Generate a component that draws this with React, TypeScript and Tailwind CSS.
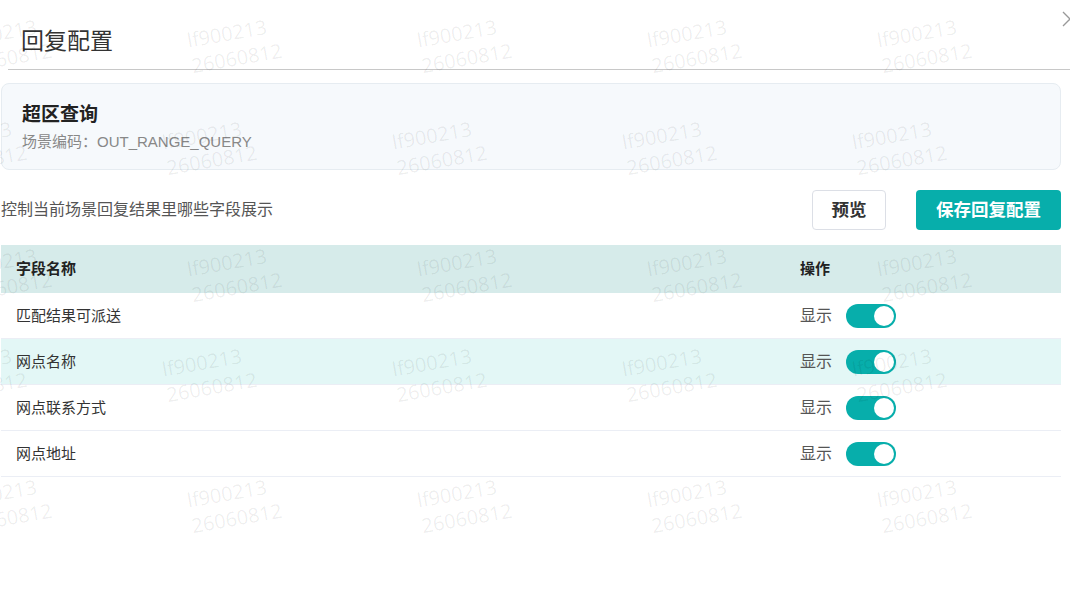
import React from "react";

const fields = ["匹配结果可派送", "网点名称", "网点联系方式", "网点地址"];

// watermark rows: [top, firstLeft]
const marks: [number, number][] = [
    [28, -45],
    [130, -70],
    [257, -45],
    [357, -70],
    [488, -45],
];

const Watermark = () => (
    <div className="pointer-events-none absolute inset-0 z-10 overflow-hidden">
        {marks.map(([top, left], r) =>
            [0, 1, 2, 3, 4].map((k) => (
                <div
                    key={`${r}-${k}`}
                    className="absolute origin-top-left -rotate-[10deg] whitespace-nowrap text-[20px] leading-[26px] text-black/[0.07]"
                    style={{ top, left: left + 230 * k, fontFamily: '"Open Sans", sans-serif' }}
                >
                    <div>lf900213</div>
                    <div>26060812</div>
                </div>
            ))
        )}
    </div>
);

const Toggle = () => (
    <div className="flex h-[24px] w-[50px] items-center justify-end rounded-full bg-[#07aeab] pr-[2px]">
        <div className="h-[20px] w-[20px] rounded-full bg-white" />
    </div>
);

export default function App() {
    return (
        <div
            className="relative h-[598px] w-[1070px] overflow-hidden bg-white text-[#333]"
            style={{ fontFamily: '"Liberation Sans", "Noto Sans CJK SC", sans-serif' }}
        >
            <Watermark />

            <svg
                className="absolute left-[1062px] top-[11px]"
                width="16"
                height="16"
                viewBox="0 0 16 16"
                fill="none"
                stroke="#999"
                strokeWidth="1.3"
            >
                <path d="M1 1 L15 15 M15 1 L1 15" />
            </svg>

            <div className="ml-[8px] border-b border-[#c8c8c8] pb-[13px] pl-[13px] pt-[26px]">
                <h1 className="text-[23px] leading-[30px] text-[#333]">回复配置</h1>
            </div>

            <div className="ml-[1px] mt-[13px] h-[87px] w-[1060px] rounded-lg border border-[#e6ecf1] bg-[#f6f9fc] pl-[20px] pt-[18px]">
                <div className="text-[19px] font-bold leading-[26px] text-[#222]">超区查询</div>
                <div className="mt-[4px] text-[15px] leading-[20px] text-[#888]">
                    场景编码：OUT_RANGE_QUERY
                </div>
            </div>

            <div className="ml-[1px] mt-[20px] flex w-[1060px] items-center justify-between">
                <span className="text-[16px] text-[#555]">控制当前场景回复结果里哪些字段展示</span>
                <div className="flex items-center gap-[30px]">
                    <button className="h-[40px] w-[74px] rounded-[4px] border border-[#dcdfe6] bg-white text-[17.5px] font-bold text-[#333]">
                        预览
                    </button>
                    <button className="h-[40px] w-[145px] rounded-[4px] bg-[#07aeab] text-[17.5px] font-bold text-white">
                        保存回复配置
                    </button>
                </div>
            </div>

            <div className="ml-[1px] mt-[15px] w-[1060px] text-[15px]">
                <div className="flex h-[48px] items-center bg-[#d6ebea] pt-[1px] font-bold text-[#222]">
                    <div className="w-[799px] pl-[15px]">字段名称</div>
                    <div className="flex-1">操作</div>
                </div>
                {fields.map((f, i) => (
                    <div
                        key={f}
                        className={`flex h-[46px] items-center border-b border-[#ebeef5] pt-[1px] ${
                            i === 1 ? "bg-[#e3f7f6]" : "bg-white"
                        }`}
                    >
                        <div className="w-[799px] pl-[15px] text-[#333]">{f}</div>
                        <div className="flex flex-1 items-center gap-[14px]">
                            <span className="text-[16px] text-[#555]">显示</span>
                            <Toggle />
                        </div>
                    </div>
                ))}
            </div>
        </div>
    );
}
